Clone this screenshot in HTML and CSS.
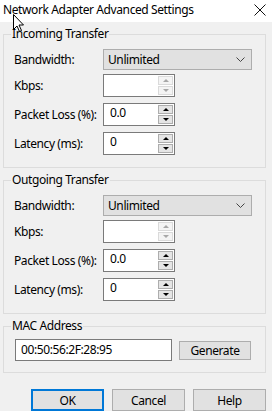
FILE: index.html
```html
<!DOCTYPE html>
<html>
<head>
<meta charset="utf-8">
<link rel="stylesheet" href="styles.css">
</head>
<body>
<div class="window">
  <div class="titlebar">
    <span class="title">Network Adapter Advanced Settings</span>
    <svg class="close" width="12" height="12" viewBox="0 0 12 12"><path d="M0.5 0.5 L11.5 11.5 M11.5 0.5 L0.5 11.5" stroke="#111" stroke-width="1" fill="none"/></svg>
  </div>
  <div class="content">
    <fieldset class="group">
      <legend>Incoming Transfer</legend>
      <div class="rows">
        <div class="row row-select">
          <span class="label">Bandwidth:</span>
          <div class="select"><span>Unlimited</span><svg class="chev" width="9" height="5" viewBox="0 0 9 5"><path d="M0.5 0.5 L4.5 4.5 L8.5 0.5" stroke="#444" stroke-width="1" fill="none"/></svg></div>
        </div>
        <div class="row">
          <span class="label">Kbps:</span>
          <div class="spin disabled"><div class="spin-text"></div><div class="spin-btns"><div class="sb"><span class="tri up"></span></div><div class="sb"><span class="tri down"></span></div></div></div>
        </div>
        <div class="row">
          <span class="label">Packet Loss (%):</span>
          <div class="spin"><div class="spin-text">0.0</div><div class="spin-btns"><div class="sb"><span class="tri up"></span></div><div class="sb"><span class="tri down"></span></div></div></div>
        </div>
        <div class="row">
          <span class="label">Latency (ms):</span>
          <div class="spin"><div class="spin-text">0</div><div class="spin-btns"><div class="sb"><span class="tri up"></span></div><div class="sb"><span class="tri down"></span></div></div></div>
        </div>
      </div>
    </fieldset>

    <fieldset class="group">
      <legend>Outgoing Transfer</legend>
      <div class="rows">
        <div class="row row-select">
          <span class="label">Bandwidth:</span>
          <div class="select"><span>Unlimited</span><svg class="chev" width="9" height="5" viewBox="0 0 9 5"><path d="M0.5 0.5 L4.5 4.5 L8.5 0.5" stroke="#444" stroke-width="1" fill="none"/></svg></div>
        </div>
        <div class="row">
          <span class="label">Kbps:</span>
          <div class="spin disabled"><div class="spin-text"></div><div class="spin-btns"><div class="sb"><span class="tri up"></span></div><div class="sb"><span class="tri down"></span></div></div></div>
        </div>
        <div class="row">
          <span class="label">Packet Loss (%):</span>
          <div class="spin"><div class="spin-text">0.0</div><div class="spin-btns"><div class="sb"><span class="tri up"></span></div><div class="sb"><span class="tri down"></span></div></div></div>
        </div>
        <div class="row">
          <span class="label">Latency (ms):</span>
          <div class="spin"><div class="spin-text">0</div><div class="spin-btns"><div class="sb"><span class="tri up"></span></div><div class="sb"><span class="tri down"></span></div></div></div>
        </div>
      </div>
    </fieldset>

    <fieldset class="group mac">
      <legend>MAC Address</legend>
      <div class="mac-row">
        <div class="textbox">00:50:56:2F:28:95</div>
        <div class="btn btn-gen">Generate</div>
      </div>
    </fieldset>

    <div class="actions">
      <div class="btn btn-main default">OK</div>
      <div class="btn btn-main">Cancel</div>
      <div class="btn btn-main">Help</div>
    </div>
  </div>
  <svg class="cursor" width="13" height="19" viewBox="0 0 13 19"><path d="M0.5 0.5 L0.5 15.5 L4 12 L6.5 17.5 L8.5 16.5 L6 11 L10.5 11 Z" fill="#fff" stroke="#000" stroke-width="1" stroke-linejoin="miter"/></svg>
</div>
</body>
</html>
```

FILE: styles.css
```css
* { box-sizing: border-box; }
html, body {
  margin: 0;
  padding: 0;
  background: #f0f0f0;
}
body {
  font-family: "Noto Sans", "Liberation Sans", sans-serif;
  font-size: 12px;
  letter-spacing: -0.4px;
  color: #000;
  width: 272px;
  height: 411px;
  overflow: hidden;
}
.window {
  position: relative;
  width: 272px;
  height: 411px;
}
.titlebar {
  height: 22px;
  background: #ffffff;
  display: flex;
  align-items: flex-start;
  justify-content: space-between;
  padding: 0 6px 0 3px;
}
.title {
  font-size: 12px;
  line-height: 17px;
  padding-top: 1px;
}
.close {
  margin-top: 4px;
}
.content {
  padding: 4px 6px 0 3px;
}
.group {
  margin: 0 0 4px 0;
  padding: 7px 10px 12px 10px;
  border: 1px solid #dcdcdc;
  min-width: 0;
}
.group legend {
  padding: 0 1px;
  margin-left: -3px;
  line-height: 16px;
  font-size: 12px;
}
.rows {
  display: flex;
  flex-direction: column;
  gap: 6px;
}
.row {
  display: flex;
  align-items: center;
  height: 23px;
}
.row-select {
  height: 21px;
  margin-bottom: -2px;
}
.label {
  width: 89px;
  flex: none;
  white-space: nowrap;
}
.select {
  width: 149px;
  height: 21px;
  background: #e1e1e1;
  border: 1px solid #adadad;
  display: flex;
  align-items: center;
  justify-content: space-between;
  padding: 0 6px 0 4px;
}
.chev { display: block; }
.spin {
  width: 72px;
  height: 23px;
  border: 1px solid #7a7a7a;
  background: #fff;
  display: flex;
}
.spin-text {
  flex: 1;
  padding: 0 0 0 6px;
  line-height: 17px;
}
.spin-btns {
  width: 16px;
  display: flex;
  flex-direction: column;
  gap: 1px;
  padding: 1px 1px 1px 0;
}
.sb {
  flex: 1;
  border: 1px solid #adadad;
  background: #e5e5e5;
  display: flex;
  align-items: center;
  justify-content: center;
}
.tri {
  width: 0;
  height: 0;
  border-left: 3px solid transparent;
  border-right: 3px solid transparent;
}
.tri.up { border-bottom: 3px solid #000; }
.tri.down { border-top: 3px solid #000; }
.spin.disabled .sb {
  border-color: #dadada;
  background: #f4f4f4;
}
.spin.disabled .tri.up { border-bottom-color: #a8a8a8; }
.spin.disabled .tri.down { border-top-color: #a8a8a8; }

.mac {
  padding: 5px 10px 11px 11px;
  margin-bottom: 0;
}
.mac legend { margin-left: -4px; }
.mac-row {
  display: flex;
  align-items: center;
  gap: 7px;
}
.textbox {
  width: 157px;
  height: 22px;
  border: 1px solid #7a7a7a;
  background: #fff;
  padding: 1px 0 0 5px;
  line-height: 18px;
}
.btn {
  background: #e1e1e1;
  border: 1px solid #adadad;
  display: flex;
  align-items: center;
  justify-content: center;
}
.btn-gen {
  width: 72px;
  height: 19px;
}
.actions {
  display: flex;
  justify-content: flex-end;
  gap: 8px;
  margin-top: 16px;
}
.btn-main {
  width: 73px;
  height: 22px;
}
.btn-main.default {
  border: 2px solid #0078d7;
}
.cursor {
  position: absolute;
  left: 13px;
  top: 14px;
}
```
